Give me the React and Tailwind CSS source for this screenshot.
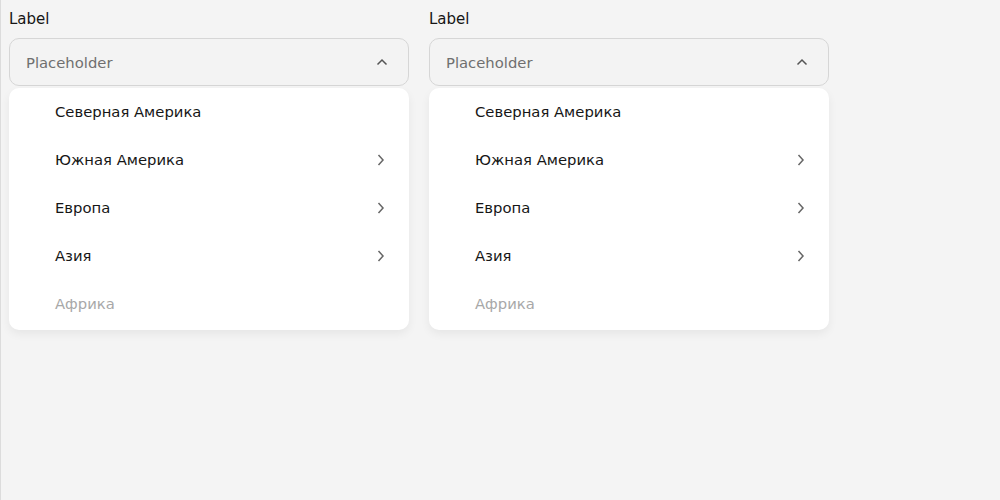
const regions = [
  { name: "Северная Америка", sub: false, disabled: false },
  { name: "Южная Америка", sub: true, disabled: false },
  { name: "Европа", sub: true, disabled: false },
  { name: "Азия", sub: true, disabled: false },
  { name: "Африка", sub: false, disabled: true },
];

function ChevronUp() {
  return (
    <svg width="12" height="8" viewBox="0 0 12 8" fill="none">
      <path d="M1.5 6.5L6 2L10.5 6.5" stroke="#555" strokeWidth="1.5" />
    </svg>
  );
}

function ChevronRight() {
  return (
    <svg width="8" height="12" viewBox="0 0 8 12" fill="none">
      <path d="M1.5 1L6 6L1.5 11" stroke="#666" strokeWidth="1.5" />
    </svg>
  );
}

function Select() {
  return (
    <div className="w-[400px] flex flex-col">
      <div className="h-[38px] pt-[9px] text-[15px] leading-5 text-[#161616]">Label</div>
      <div className="h-[48px] flex items-center justify-between rounded-[10px] border border-[#d6d6d6] bg-[#f3f3f3] pl-4 pr-[20px]">
        <span className="text-[14.8px] pt-[2px] text-[#6f6f6f]">Placeholder</span>
        <ChevronUp />
      </div>
      <div className="mt-[2px] pb-[2px] rounded-[10px] bg-white shadow-[0_4px_10px_rgba(0,0,0,0.06)]">
        {regions.map((r) => (
          <div
            key={r.name}
            className="h-[48px] flex items-center justify-between pl-[46px] pr-[24px]"
          >
            <span
              className={`text-[14.8px] pt-px ${r.disabled ? "text-[#a8a8a8]" : "text-[#161616]"}`}
            >
              {r.name}
            </span>
            {r.sub && <ChevronRight />}
          </div>
        ))}
      </div>
    </div>
  );
}

export default function App() {
  return (
    <div
      className="h-[500px] w-[1000px] bg-[#f4f4f4] border-l border-[#dcdcdc] pl-[8px] flex gap-5"
      style={{ fontFamily: '"DejaVu Sans", sans-serif' }}
    >
      <Select />
      <Select />
    </div>
  );
}
